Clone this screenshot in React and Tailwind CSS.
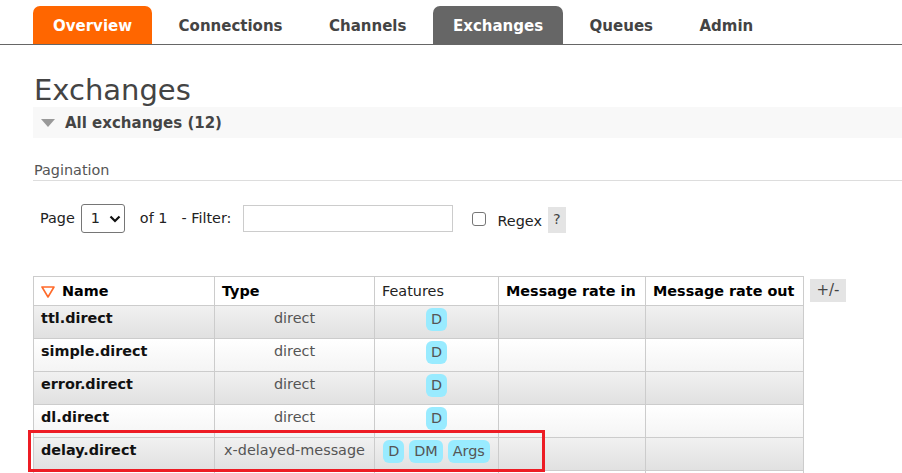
import React from "react";

const rows = [
  { name: "ttl.direct", type: "direct", feats: ["D"] },
  { name: "simple.direct", type: "direct", feats: ["D"] },
  { name: "error.direct", type: "direct", feats: ["D"] },
  { name: "dl.direct", type: "direct", feats: ["D"] },
  { name: "delay.direct", type: "x-delayed-message", feats: ["D", "DM", "Args"] },
  { name: "", type: "", feats: [] },
];

function Tab({ label, active }) {
  const cls = active === "orange"
    ? "bg-[#ff6600] text-white"
    : active === "gray"
    ? "bg-[#666666] text-white"
    : "text-[#444444]";
  return (
    <div className={`h-[38px] px-5 pt-[2px] flex items-center rounded-t-[7px] text-[15px] font-bold ${cls}`}>
      {label}
    </div>
  );
}

function Badge({ children }) {
  return (
    <span className="inline-flex items-center h-[23px] px-[5px] rounded-[6px] bg-[#99ebff] text-[#555555]">
      {children}
    </span>
  );
}

export default function App() {
  return (
    <div className="relative w-[902px] h-[473px] overflow-hidden bg-white font-['DejaVu_Sans',sans-serif] text-[14.4px] text-[#444444]">
      {/* Tabs */}
      <div className="flex gap-[6.5px] pl-[33px] pt-[6px] border-b border-[#666666]">
        <Tab label="Overview" active="orange" />
        <Tab label="Connections" />
        <Tab label="Channels" />
        <Tab label="Exchanges" active="gray" />
        <Tab label="Queues" />
        <Tab label="Admin" />
      </div>

      <div className="pl-[33px]">
        <h1 className="mt-[29px] pl-[1px] text-[29px] leading-[32px] text-[#444444]">Exchanges</h1>

        <div className="mt-[1px] h-[31px] bg-[#f8f8f8] flex items-center">
          <svg width="14" height="8" viewBox="0 0 14 8" className="ml-[8px]">
            <polygon points="0,0 14,0 7,8" fill="#999999" />
          </svg>
          <span className="ml-[10px] pt-[1px] text-[15px] font-bold text-[#444444]">All exchanges (12)</span>
        </div>

        <div className="mt-[22px] h-[21px] border-b border-[#dddddd] pl-[1px] leading-[20px] text-[#555555]">
          Pagination
        </div>

        <div className="mt-[23px] h-[29px] flex items-center pl-[7px] text-[#222222]">
          <span>Page</span>
          <div className="ml-[6px] w-[44px] h-[29px] border border-[#767676] rounded-[3px] flex items-center pl-[9px]">
            <span>1</span>
            <svg width="12" height="8" viewBox="0 0 12 8" className="ml-[9px]">
              <polyline points="1.5,1.5 6,6 10.5,1.5" fill="none" stroke="#111111" strokeWidth="2.2" />
            </svg>
          </div>
          <span className="ml-[15px]">of 1</span>
          <span className="ml-[14px]">- Filter:</span>
          <div className="ml-[12px] w-[210px] h-[27px] border border-[#cccccc] bg-white" />
          <div className="ml-[19px] w-[14px] h-[14px] border border-[#767676] rounded-[3px] bg-white" />
          <span className="ml-[11px] translate-y-[3px]">Regex</span>
          <span className="ml-[6px] w-[18px] h-[26px] bg-[#e4e4e4] flex items-center justify-center translate-y-[1px] text-[#444444]">?</span>
        </div>

        {/* Table */}
        <div className="mt-[43px] flex items-start">
          <div className="border-l border-t border-[#cccccc]">
            <div className="grid grid-cols-[181px_160px_124px_147px_158px] h-[29px] bg-white text-black">
              <div className="border-r border-b border-[#cccccc] flex items-center pl-[7px] pt-[2px] font-bold">
                <svg width="14" height="12" viewBox="0 0 14 12" className="mr-[7px]">
                  <polygon points="1,1 13,1 7,11" fill="none" stroke="#ff6a2a" strokeWidth="1.6" strokeLinejoin="round" />
                </svg>
                Name
              </div>
              <div className="border-r border-b border-[#cccccc] flex items-center pl-[7px] pt-[2px] font-bold">Type</div>
              <div className="border-r border-b border-[#cccccc] flex items-center pl-[7px] pt-[2px] text-[#222222]">Features</div>
              <div className="border-r border-b border-[#cccccc] flex items-center pl-[7px] pt-[2px] font-bold">Message rate in</div>
              <div className="border-r border-b border-[#cccccc] flex items-center pl-[7px] pt-[2px] font-bold">Message rate out</div>
            </div>
            {rows.map((r, i) => {
              const bg = i % 2 === 0
                ? "bg-linear-to-b from-[#f1f1f1] to-[#e0e0e0]"
                : "bg-linear-to-b from-[#ffffff] to-[#f4f4f4]";
              return (
                <div key={i} className={`grid grid-cols-[181px_160px_124px_147px_158px] h-[33px] ${bg}`}>
                  <div className="border-r border-b border-[#cccccc] pl-[7px] pt-[2px] leading-[20px] font-bold text-[#111111]">{r.name}</div>
                  <div className="border-r border-b border-[#cccccc] pt-[2px] leading-[20px] text-center text-[#555555]">{r.type}</div>
                  <div className="border-r border-b border-[#cccccc] pt-[2px] flex justify-center gap-[5px] items-start">
                    {r.feats.map((f) => <Badge key={f}>{f}</Badge>)}
                  </div>
                  <div className="border-r border-b border-[#cccccc]" />
                  <div className="border-r border-b border-[#cccccc]" />
                </div>
              );
            })}
          </div>
          <div className="ml-[6px] mt-[3px] w-[36px] h-[23px] bg-[#e4e4e4] flex items-center justify-center text-[15px] text-[#444444]">+/-</div>
        </div>
      </div>

      {/* Highlight */}
      <div className="absolute left-[28px] top-[430px] w-[517px] h-[42px] border-[3px] border-[#ed1c24]" />
    </div>
  );
}
